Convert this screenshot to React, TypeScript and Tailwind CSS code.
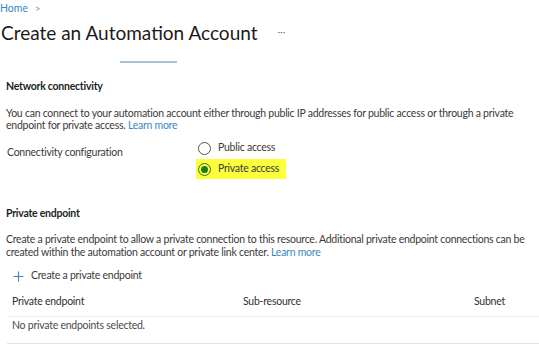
function Radio({ label, checked }: { label: string; checked?: boolean }) {
  return (
    <div
      className={
        "flex items-center gap-[7px] h-[20px] pl-[2px] pr-[7px] " +
        (checked ? "bg-[#fbff3c]" : "")
      }
    >
      <span
        className={
          "w-[13px] h-[13px] rounded-full border flex items-center justify-center " +
          (checked ? "border-[#2e6e2e]" : "border-[#555]")
        }
      >
        {checked && <span className="w-[7px] h-[7px] rounded-full bg-[#1f7a1f]" />}
      </span>
      <span className="text-[#3b3a39]">{label}</span>
    </div>
  );
}

export default function App() {
  return (
    <div
      className="w-[539px] h-[350px] bg-white overflow-hidden text-[10.5px] tracking-[-0.25px] text-[#3b3a39]"
      style={{ fontFamily: 'Lato, "Open Sans", Arial, sans-serif' }}
    >
      {/* Breadcrumb */}
      <div className="flex items-center gap-[7px] h-[16px] pt-[1px] text-[10.5px] tracking-normal text-[#3d87c2]">
        <span>Home</span>
        <span className="text-[#8a8886] text-[9px]">&gt;</span>
      </div>

      {/* Title */}
      <div className="flex items-center h-[34px] tracking-normal">
        <h1 className="text-[19px] text-[#1b1a19] pl-[1px]">Create an Automation Account</h1>
        <span className="ml-[20px] text-[#777] text-[10px] -mt-[4px]">···</span>
      </div>

      {/* tab underline */}
      <div className="pl-[120px] pt-[11px]">
        <div className="w-[57px] h-[2px] bg-[#a9c3d6]" />
      </div>

      <div className="pl-[6px]">
        <h2 className="font-bold text-[#201f1e] mt-[15px] leading-[16px]">Network connectivity</h2>
        <p className="mt-[13px] leading-[12px] whitespace-nowrap">
          You can connect to your automation account either through public IP addresses for public access or through a private
          <br />
          endpoint for private access. <span className="text-[#3d87c2]">Learn more</span>
        </p>

        <div className="flex mt-[7px]">
          <div className="w-[190px] pt-[8px] pl-[1px] leading-[12px]">Connectivity configuration</div>
          <div className="flex flex-col gap-[1px]">
            <Radio label="Public access" />
            <Radio label="Private access" checked />
          </div>
        </div>

        <h2 className="font-bold text-[#201f1e] mt-[26px] leading-[16px]">Private endpoint</h2>
        <p className="mt-[12px] leading-[13px] whitespace-nowrap">
          Create a private endpoint to allow a private connection to this resource. Additional private endpoint connections can be
          <br />
          created within the automation account or private link center. <span className="text-[#3d87c2]">Learn more</span>
        </p>

        <div className="flex items-center gap-[7px] mt-[8px] pl-[7px] h-[18px]">
          <svg width="11" height="11" viewBox="0 0 11 11" className="text-[#3d87c2]">
            <path d="M5.5 0.5 V10.5 M0.5 5.5 H10.5" stroke="currentColor" strokeWidth="1.1" fill="none" />
          </svg>
          <span>Create a private endpoint</span>
        </div>

        <div className="mt-[8px] flex items-center h-[18px] pl-[6px] pr-[8px] text-[#323130]">
          <span className="w-[231px]">Private endpoint</span>
          <span className="flex-1">Sub-resource</span>
          <span className="w-[57px]">Subnet</span>
        </div>
        <div className="border-t border-[#eeeeee] mt-[5px] ml-[1px]" />
        <div className="h-[18px] flex items-center pl-[6px] text-[#4a4a4a]">No private endpoints selected.</div>
        <div className="border-t border-[#e3e3e3] mt-[8px] ml-[1px]" />
      </div>
    </div>
  );
}
